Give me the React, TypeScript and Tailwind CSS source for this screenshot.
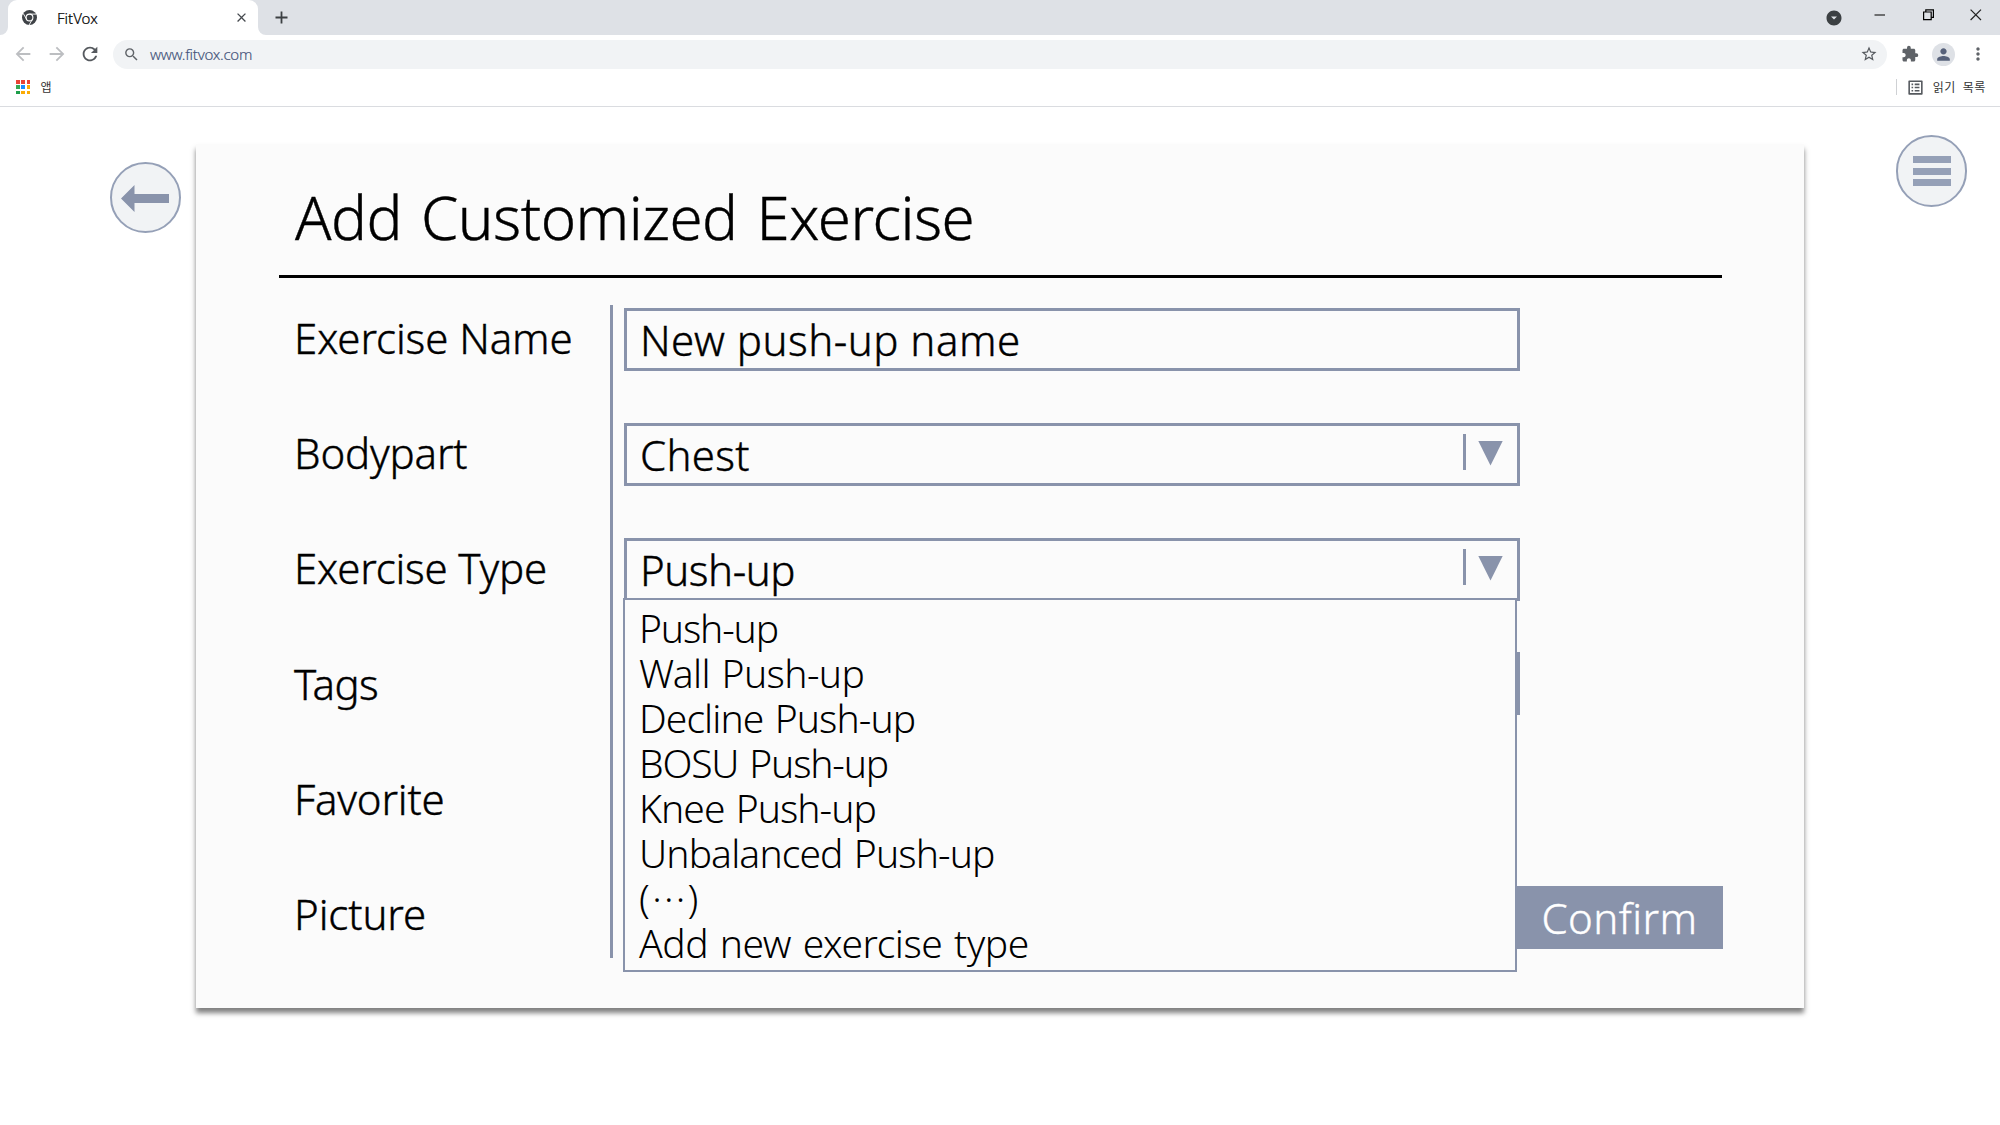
import React from "react";
import {
  MdArrowBack,
  MdArrowDropDownCircle,
  MdArrowForward,
  MdClose,
  MdExtension,
  MdMoreVert,
  MdOutlineListAlt,
  MdPerson,
  MdRefresh,
  MdSearch,
  MdStarBorder,
} from "react-icons/md";

const labels = [
  { text: "Exercise Name", tracking: "tracking-[-0.1px]" },
  { text: "Bodypart", tracking: "tracking-[-0.15px]" },
  { text: "Exercise Type", tracking: "tracking-[-0.2px]" },
  { text: "Tags", tracking: "tracking-[-0.5px]" },
  { text: "Favorite", tracking: "tracking-[-0.2px]" },
  { text: "Picture", tracking: "tracking-[-0.1px]" },
];

const exerciseTypes = [
  { text: "Push-up", tracking: "tracking-[-1.15px]" },
  { text: "Wall Push-up", tracking: "tracking-[-0.6px]" },
  { text: "Decline Push-up", tracking: "tracking-[-0.9px]" },
  { text: "BOSU Push-up", tracking: "tracking-[-1.18px]" },
  { text: "Knee Push-up", tracking: "tracking-[-0.95px]" },
  { text: "Unbalanced Push-up", tracking: "tracking-[-0.88px]" },
  { text: "(···)", tracking: "tracking-[2.3px]" },
  { text: "Add new exercise type", tracking: "tracking-[-0.45px]" },
];

const appDots = [
  "bg-[#ea4335]", "bg-[#ea4335]", "bg-[#ea4335]",
  "bg-[#34a853]", "bg-[#1a8cff]", "bg-[#fbab05]",
  "bg-[#1e9e4a]", "bg-[#fbab05]", "bg-[#fbab05]",
];

function Favicon() {
  return (
    <svg className="ml-[14px]" width="15" height="15" viewBox="0 0 15 15" fill="none">
      <circle cx="7.5" cy="7.5" r="7.5" fill="#3f4347" />
      <circle cx="7.5" cy="7.5" r="3.4" stroke="#fff" strokeWidth="1.1" />
      <path d="M7.5 4.1H14.2M4.55 9.2 1.2 3.4M10.45 9.2 7.1 15" stroke="#fff" strokeWidth="0.9" />
    </svg>
  );
}

function TabStrip() {
  return (
    <div className="flex h-[35px] bg-[#dee1e6]">
      <div className="relative ml-2 flex h-full w-[250px] items-center rounded-t-[9px] bg-white">
        <svg className="absolute bottom-0 left-[-8px]" width="8" height="8" viewBox="0 0 8 8">
          <path d="M8 0v8H0a8 8 0 0 0 8-8Z" fill="#fff" />
        </svg>
        <svg className="absolute right-[-8px] bottom-0" width="8" height="8" viewBox="0 0 8 8">
          <path d="M0 0v8h8a8 8 0 0 1-8-8Z" fill="#fff" />
        </svg>
        <Favicon />
        <span className="ml-[20px] text-[15px] leading-[34px] font-light text-black [-webkit-text-stroke:0.2px]">FitVox</span>
        <MdClose size={15} className="mr-[9px] ml-auto text-[#45494e]" />
      </div>
      <svg className="mt-[11px] ml-[17px]" width="13" height="13" viewBox="0 0 13 13">
        <path d="M6.5 0.5v12M0.5 6.5h12" stroke="#3c4043" strokeWidth="1.8" />
      </svg>
      <div className="mr-[18px] ml-auto flex">
        <MdArrowDropDownCircle size={18} className="mt-[9px] text-[#3c4043]" />
        <svg className="mt-[9px] ml-[31px]" width="12" height="12" viewBox="0 0 12 12">
          <path d="M0.5 6h10.5" stroke="#222" strokeWidth="1.2" />
        </svg>
        <svg className="mt-[9px] ml-[37px]" width="12" height="12" viewBox="0 0 12 12" fill="none" stroke="#000" strokeWidth="1.2">
          <path d="M0.6 3h7.6v7.6H0.6z" />
          <path d="M2.8 3V0.8h7.6v7.6H8.2" />
        </svg>
        <svg className="mt-[9px] ml-[35px]" width="12" height="12" viewBox="0 0 12 12">
          <path d="M0.6 0.6 11 11M11 0.6 0.6 11" stroke="#222" strokeWidth="1.2" />
        </svg>
      </div>
    </div>
  );
}

function Toolbar() {
  return (
    <div className="flex h-[38px] items-center bg-white">
      <MdArrowBack size={22} className="ml-[12px] text-[#bcbec1]" />
      <MdArrowForward size={22} className="ml-[12px] text-[#bcbec1]" />
      <MdRefresh size={22} className="ml-[11px] text-[#55595e]" />
      <div className="ml-[12px] flex h-[29px] w-[1774px] items-center rounded-full bg-[#f1f3f5]">
        <MdSearch size={17} className="ml-[10px] text-[#5f6368]" />
        <span className="ml-[10px] text-[15px] leading-[28px] font-light tracking-[-0.25px] text-[#44547a] [-webkit-text-stroke:0.15px]">
          www.fitvox.com
        </span>
        <MdStarBorder size={18} className="mr-[9px] ml-auto text-[#55595e]" />
      </div>
      <MdExtension size={18} className="ml-[14px] text-[#5f6368]" />
      <div className="ml-[13px] flex size-[23px] items-center justify-center rounded-full bg-[#dee1e6]">
        <MdPerson size={19} className="text-[#56617a]" />
      </div>
      <MdMoreVert size={20} className="ml-[13px] text-[#5f6368]" />
    </div>
  );
}

function BookmarksBar() {
  return (
    <div className="flex h-[34px] items-start border-b border-[#dadce0] bg-white pt-[6px] text-[#333]">
      <div className="mt-px ml-[16px] grid grid-cols-3 gap-[1.5px]">
        {appDots.map((color, i) => (
          <span key={i} className={`size-[3.8px] ${color}`} />
        ))}
      </div>
      <span className="ml-[10px] font-['Noto_Sans_CJK_KR',sans-serif] text-[12px] leading-[16px]">앱</span>
      <span className="ml-auto h-4 w-px bg-[#cfd1d4]" />
      <MdOutlineListAlt size={19} className="mt-[-1px] ml-[9px] text-[#55595e]" />
      <span className="mr-[14px] ml-[8px] font-['Noto_Sans_CJK_KR',sans-serif] text-[12px] leading-[16px] tracking-[0.6px] [word-spacing:3.5px]">
        읽기 목록
      </span>
    </div>
  );
}

function Field({ value, tracking = "", select = false, className = "", children }: {
  value?: string;
  tracking?: string;
  select?: boolean;
  className?: string;
  children?: React.ReactNode;
}) {
  return (
    <div className={`relative flex h-[63px] w-[896px] border-[3px] border-[#8993ab] bg-[#fbfbfb] ${className}`}>
      <span className={`pl-[13px] leading-[57px] [-webkit-text-stroke:0.4px] ${tracking}`}>{value}</span>
      {select && (
        <div className="mr-[14px] ml-auto flex">
          <span className="mt-[8px] h-[36px] w-[3px] bg-[#8993ab]" />
          <svg className="mt-[15px] ml-[12px]" width="25" height="25" viewBox="0 0 25 25">
            <path d="M0.3 0h24.4L12.5 24.4z" fill="#8993ab" />
          </svg>
        </div>
      )}
      {children}
    </div>
  );
}

function TypeMenu() {
  return (
    <ul className="absolute top-[57px] left-[-4px] z-10 h-[374px] w-[894px] border-2 border-[#8993ab] bg-[#fbfbfb] pt-[5px] pl-[14px] text-[39px] [word-spacing:2px]">
      {exerciseTypes.map((t) => (
        <li key={t.text} className={`h-[45px] leading-[45px] ${t.tracking}`}>{t.text}</li>
      ))}
    </ul>
  );
}

function ExerciseCard() {
  return (
    <section className="mt-[37px] ml-[15px] h-[864px] w-[1608px] bg-[#fbfbfb] shadow-[0_5px_5px_rgba(0,0,0,0.5)]">
      <header className="mr-[82px] ml-[83px] h-[134px] border-b-[3px] border-black pt-[33px] pl-[16px]">
        <h1 className="text-[60px] leading-[80px] font-light tracking-[-0.5px] [word-spacing:4px] [-webkit-text-stroke:0.4px]">
          Add Customized Exercise
        </h1>
      </header>
      <div className="flex pl-[98px] text-[42px] font-light">
        <div className="w-[316px] pt-[30px] [-webkit-text-stroke:0.4px]">
          {labels.map((l) => (
            <div key={l.text} className={`h-[115.2px] leading-[60px] ${l.tracking}`}>{l.text}</div>
          ))}
        </div>
        <div className="mt-[27px] h-[653px] w-[3px] bg-[#8993ab]" />
        <div className="ml-[11px] pt-[30px]">
          <Field value="New push-up name" tracking="tracking-[0.5px]" />
          <Field value="Chest" tracking="tracking-[0.3px]" select className="mt-[52px]" />
          <Field value="Push-up" tracking="tracking-[-0.45px]" select className="mt-[52px]">
            <TypeMenu />
          </Field>
          <Field className="mt-[51px]" />
          <button className="mt-[171px] ml-[892px] block h-[63px] w-[207px] bg-[#8993ab] text-center leading-[63px] tracking-[0.45px] text-white [-webkit-text-stroke:0.4px]">
            Confirm
          </button>
        </div>
      </div>
    </section>
  );
}

export default function App() {
  return (
    <div className="h-[1125px] w-[2000px] overflow-hidden bg-white font-['Noto_Sans',sans-serif] text-black">
      <TabStrip />
      <Toolbar />
      <BookmarksBar />
      <main className="flex items-start">
        <button className="mt-[55px] ml-[110px] flex size-[71px] items-center justify-center rounded-full border-2 border-[#95a0b7] bg-[#f1f3f5] pt-px pr-px">
          <svg width="48" height="27" viewBox="0 0 48 27">
            <path d="M0 13.5 13.5 0v9H48v9H13.5v9z" fill="#8993ab" />
          </svg>
        </button>
        <ExerciseCard />
        <button className="mt-[28px] ml-[92px] flex h-[72px] w-[71px] flex-col items-center justify-center gap-[4.5px] rounded-full border-2 border-[#95a0b7] bg-[#f1f3f5]">
          <span className="h-[7px] w-[38px] bg-[#95a0b7]" />
          <span className="h-[7px] w-[38px] bg-[#95a0b7]" />
          <span className="h-[7px] w-[38px] bg-[#95a0b7]" />
        </button>
      </main>
    </div>
  );
}
